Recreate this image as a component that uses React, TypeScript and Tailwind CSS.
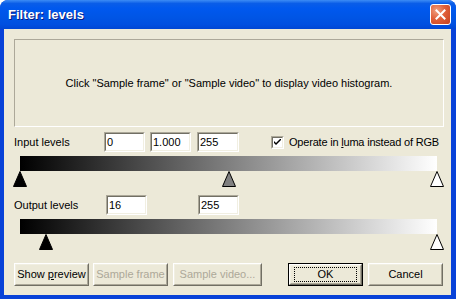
import type { ReactNode } from "react";

const font = "font-['Liberation_Sans',Arial,sans-serif]";

const EditBox = ({ value, className = "" }: { value: string; className?: string }) => (
  <div className={`h-[20px] w-[41px] border border-t-[#ACA899] border-l-[#ACA899] border-b-white border-r-white ${className}`}>
    <div className="flex h-full w-full items-center border border-t-[#716F64] border-l-[#716F64] border-b-[#F1EFE2] border-r-[#F1EFE2] bg-white pl-[1px] text-[11px] text-black">
      {value}
    </div>
  </div>
);

const Button = ({
  children,
  disabled,
  isDefault,
  className = "w-[75px]",
}: {
  children: ReactNode;
  disabled?: boolean;
  isDefault?: boolean;
  className?: string;
}) => (
  <div className={`h-[23px] ${isDefault ? "border border-black" : ""} ${className}`}>
    <div className="h-full w-full border border-t-white border-l-white border-b-[#716F64] border-r-[#716F64]">
      <div className="flex h-full w-full items-center justify-center border border-t-[#F1EFE2] border-l-[#F1EFE2] border-b-[#ACA899] border-r-[#ACA899] bg-[#ECE9D8]">
        <div
          className={`flex h-[15px] items-center justify-center whitespace-nowrap px-[1px] text-[11px] ${
            disabled ? "text-[#ACA899]" : "text-black"
          } ${isDefault ? "w-[63px] border border-dotted border-black" : ""}`}
        >
          <span>{children}</span>
        </div>
      </div>
    </div>
  </div>
);

const Thumb = ({ at, fill }: { at: number; fill: string }) => (
  <svg
    width="14"
    height="16"
    viewBox="0 0 14 16"
    className="absolute top-0"
    style={{ left: (at / 255) * 417 - 7 }}
  >
    <polygon points="7,0.5 13.5,15.5 0.5,15.5" fill={fill} stroke="#000" strokeWidth="1" />
  </svg>
);

const LevelBar = ({ thumbs }: { thumbs: { at: number; fill: string }[] }) => (
  <div className="ml-[6px] w-[417px]">
    <div className="h-[15px] w-full bg-[linear-gradient(to_right,#000,#fff)]" />
    <div className="relative h-[16px] w-full">
      {thumbs.map((t) => (
        <Thumb key={t.at} at={t.at} fill={t.fill} />
      ))}
    </div>
  </div>
);

export default function App() {
  return (
    <div className={`h-[299px] w-[456px] bg-white ${font}`}>
      <div className="flex h-full flex-col rounded-t-[8px] bg-[#0842D8]">
        <div className="flex h-[29px] items-center rounded-t-[8px] bg-[linear-gradient(to_bottom,#3D8CF5_0%,#0A5DE8_12%,#0058EE_30%,#0055E5_60%,#004FE0_85%,#0046D4_100%)] pl-[8px] pr-[5px]">
          <span className="pt-[1px] text-[13px] font-bold text-white [text-shadow:1px_1px_0_#0A1A80]">
            Filter: levels
          </span>
          <div className="ml-auto flex h-[21px] w-[21px] items-center justify-center rounded-[3px] border border-white bg-[radial-gradient(circle_at_30%_30%,#F0A080,#E0603A_45%,#C6401E)]">
            <svg width="11" height="11" viewBox="0 0 11 11">
              <path d="M1.5 1.5 L9.5 9.5 M9.5 1.5 L1.5 9.5" stroke="#fff" strokeWidth="2" strokeLinecap="square" />
            </svg>
          </div>
        </div>

        <div className="mb-[4px] ml-[4px] mr-[5px] flex flex-1 flex-col bg-[#ECE9D8] pl-[10px] pt-[10px] text-[11px] text-black">
          <div className="flex h-[88px] w-[430px] items-center justify-center border border-t-[#ACA899] border-l-[#ACA899] border-b-white border-r-white">
            Click "Sample frame" or "Sample video" to display video histogram.
          </div>

          <div className="mt-[5px] flex h-[20px] items-center">
            <span className="w-[90px]">Input levels</span>
            <EditBox value="0" className="w-[41px]" />
            <EditBox value="1.000" className="ml-[5px] w-[41px]" />
            <EditBox value="255" className="ml-[6px] w-[42px]" />
            <div className="ml-[32px] flex items-center">
              <div className="flex h-[13px] w-[13px] items-center justify-center border border-t-[#ACA899] border-l-[#ACA899] border-b-white border-r-white">
                <div className="flex h-full w-full items-center justify-center border border-t-[#716F64] border-l-[#716F64] border-b-[#F1EFE2] border-r-[#F1EFE2] bg-white">
                  <svg width="7" height="7" viewBox="0 0 7 7">
                    <path d="M0 2 L0 4 L2 6 L7 1 L7 -1 L2 4 Z" fill="#000" />
                  </svg>
                </div>
              </div>
              <span className="ml-[5px] tracking-[-0.2px]">
                Operate in <u className="underline-offset-[1px]">l</u>uma instead of RGB
              </span>
            </div>
          </div>

          <div className="mt-[4px]">
            <LevelBar
              thumbs={[
                { at: 0, fill: "#000" },
                { at: 127.5, fill: "#808080" },
                { at: 255, fill: "#fff" },
              ]}
            />
          </div>

          <div className="mt-[8px] flex h-[20px] items-center">
            <span className="w-[92px]">Output levels</span>
            <EditBox value="16" />
            <EditBox value="255" className="ml-[51px]" />
          </div>

          <div className="mt-[4px]">
            <LevelBar
              thumbs={[
                { at: 16, fill: "#000" },
                { at: 255, fill: "#fff" },
              ]}
            />
          </div>

          <div className="mt-[13px] flex">
            <Button>
              Show <u className="underline-offset-[1px]">p</u>review
            </Button>
            <Button disabled className="ml-[4px] w-[75px]">
              Sample frame
            </Button>
            <Button disabled className="ml-[5px] w-[89px]">
              Sample video...
            </Button>
            <Button isDefault className="ml-[26px] w-[75px]">
              OK
            </Button>
            <Button className="ml-[5px] w-[75px]">Cancel</Button>
          </div>
        </div>
      </div>
    </div>
  );
}
